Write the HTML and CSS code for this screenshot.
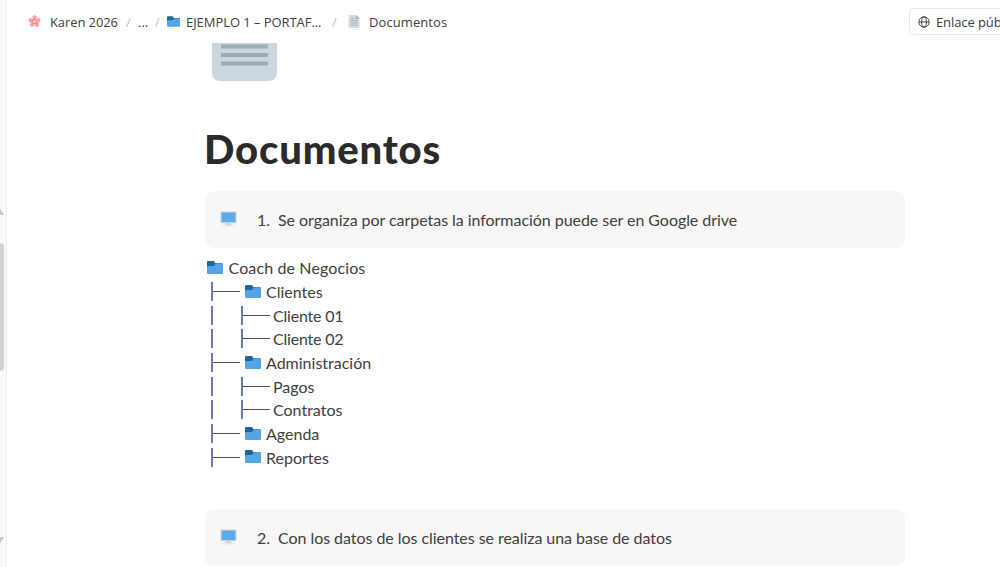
FILE: index.html
```html
<!DOCTYPE html>
<html lang="es">
<head>
  <meta charset="UTF-8">
  <meta name="viewport" content="width=device-width, initial-scale=1.0">
  <title>Documentos</title>
  <link rel="stylesheet" href="styles.css">
</head>
<body>
  <svg width="0" height="0" class="sprites">
    <symbol id="folder" viewBox="0 0 16 13">
      <path d="M0 1.2Q0 0 1.2 0H6.4Q7.4 0 7.8 1L8.3 2.2H14.8Q16 2.2 16 3.4V8H0Z" fill="#226699"/>
      <path d="M0 11.8V6.2Q0 5 1.2 5H6Q7.4 5 7.9 3.8Q8.3 2.8 9.3 2.8H14.8Q16 2.8 16 4V11.8Q16 13 14.8 13H1.2Q0 13 0 11.8Z" fill="#55a5e6"/>
    </symbol>
    <symbol id="screen" viewBox="0 0 18 17">
      <path d="M6.5 12H11.5L12.5 15.5H5.5Z" fill="#ccd6dd"/>
      <rect x="1.5" y="15" width="15" height="1.5" rx=".7" fill="#e6eaee"/>
      <rect x=".5" y=".5" width="17" height="12.5" rx="1" fill="#c3d3e0"/>
      <rect x="1.7" y="1.7" width="14.6" height="10" fill="#5aacec"/>
    </symbol>
  </svg>

  <aside class="sidebar">
    <span class="arrow up"></span>
    <span class="thumb"></span>
    <span class="arrow down"></span>
  </aside>

  <main class="page">
    <header class="topbar">
      <svg class="flower" viewBox="0 0 14 14">
        <g fill="#f6a3b2">
          <ellipse cx="7" cy="3.2" rx="2.3" ry="3"/>
          <ellipse cx="7" cy="3.2" rx="2.3" ry="3" transform="rotate(72 7 7)"/>
          <ellipse cx="7" cy="3.2" rx="2.3" ry="3" transform="rotate(144 7 7)"/>
          <ellipse cx="7" cy="3.2" rx="2.3" ry="3" transform="rotate(216 7 7)"/>
          <ellipse cx="7" cy="3.2" rx="2.3" ry="3" transform="rotate(288 7 7)"/>
        </g>
        <path d="M7 3.7L8 6L10.3 6.2L8.5 7.7L9.2 10.2L7 8.9L4.8 10.2L5.5 7.7L3.7 6.2L6 6Z" fill="#e9708a"/>
        <circle cx="7" cy="7.2" r="1.6" fill="#ffdc7d"/>
      </svg>
      <span class="crumb karen">Karen 2026</span>
      <span class="slash">/</span>
      <span class="crumb dots">...</span>
      <span class="slash">/</span>
      <svg class="crumb-folder"><use href="#folder"/></svg>
      <span class="crumb ejemplo">EJEMPLO 1 – PORTAF...</span>
      <span class="slash">/</span>
      <svg class="crumb-doc" viewBox="0 0 12 14">
        <path d="M1 0H8L12 4V13Q12 14 11 14H1Q0 14 0 13V1Q0 0 1 0Z" fill="#d6dee4"/>
        <path d="M8 0L12 4H8Z" fill="#99aab5"/>
        <path d="M2 3.5H6.5M2 6H10M2 8.5H10M2 11H10" stroke="#99aab5"/>
      </svg>
      <span class="crumb current">Documentos</span>
      <button class="share">
        <svg viewBox="0 0 13 13" fill="none" stroke="#3c3c3c">
          <circle cx="6.5" cy="6.5" r="5.6"/>
          <ellipse cx="6.5" cy="6.5" rx="2.6" ry="5.6"/>
          <path d="M1 6.5H12"/>
        </svg>
        <span>Enlace púb</span>
      </button>
    </header>

    <article class="doc">
      <svg class="cover-icon" viewBox="0 0 65 38">
        <path d="M0 0H65V29Q65 38 56 38H9Q0 38 0 29Z" fill="#ccd6e0"/>
        <path d="M9 3.5H56M9 12H56M9 20.5H56" stroke="#9aabb5" stroke-width="4"/>
      </svg>
      <h1>Documentos</h1>

      <section class="callout">
        <svg><use href="#screen"/></svg>
        <span class="num">1.</span>
        <p class="first">Se organiza por carpetas la información puede ser en Google drive</p>
      </section>

      <div class="tree">
        <div class="row"><svg><use href="#folder"/></svg><span class="root">Coach de Negocios</span></div>
        <div class="row"><i class="branch"></i><svg><use href="#folder"/></svg><span>Clientes</span></div>
        <div class="row"><i class="pipe"></i><i class="branch"></i><span class="client">Cliente 01</span></div>
        <div class="row"><i class="pipe"></i><i class="branch"></i><span class="client">Cliente 02</span></div>
        <div class="row"><i class="branch"></i><svg><use href="#folder"/></svg><span>Administración</span></div>
        <div class="row"><i class="pipe"></i><i class="branch"></i><span>Pagos</span></div>
        <div class="row"><i class="pipe"></i><i class="branch"></i><span>Contratos</span></div>
        <div class="row"><i class="branch"></i><svg><use href="#folder"/></svg><span>Agenda</span></div>
        <div class="row"><i class="branch"></i><svg><use href="#folder"/></svg><span>Reportes</span></div>
      </div>

      <section class="callout">
        <svg><use href="#screen"/></svg>
        <span class="num">2.</span>
        <p class="second">Con los datos de los clientes se realiza una base de datos</p>
      </section>
    </article>
  </main>
</body>
</html>
```
FILE: styles.css
```css
* {
  box-sizing: border-box;
}

body {
  margin: 0;
  height: 567px;
  display: flex;
  overflow: hidden;
  background: #fff;
  color: #404040;
  font-family: Lato, sans-serif;
}

.sprites {
  position: absolute;
}

/* Sidebar */
.sidebar {
  flex: none;
  width: 7px;
  height: 567px;
  padding-top: 208px;
  background: #faf9f9;
  border-right: 1px solid #eeecec;
  display: flex;
  flex-direction: column;
}

.arrow {
  width: 4px;
  height: 7px;
  background: #c9c7c7;
}

.arrow.up {
  clip-path: polygon(0 0, 100% 100%, 0 100%);
}

.arrow.down {
  margin-top: 166px;
  clip-path: polygon(0 0, 100% 0, 0 100%);
}

.thumb {
  width: 4px;
  height: 128px;
  margin-top: 28px;
  background: #d3d1d1;
  border-radius: 0 4px 4px 0;
}

.page {
  flex: none;
  width: 993px;
}

/* Top bar */
.topbar {
  display: flex;
  align-items: center;
  height: 43px;
  padding-left: 21px;
  font-family: "Open Sans", sans-serif;
  font-size: 13px;
  line-height: 20px;
  white-space: nowrap;
  overflow: hidden;
}

.topbar svg {
  flex: none;
}

.crumb {
  flex: none;
}

.flower {
  width: 13px;
  height: 13px;
}

.karen {
  width: 68px;
  margin-left: 9px;
  letter-spacing: -0.1px;
}

.slash {
  flex: none;
  width: 5px;
  color: #c4c4c4;
}

.karen + .slash {
  margin-left: 8px;
}

.dots {
  width: 10px;
  margin: 0 7px 0 7px;
}

.crumb-folder {
  width: 13px;
  height: 11px;
  margin: -1px 6px 0 7px;
}

.ejemplo {
  width: 136px;
  margin-right: 10px;
  letter-spacing: -0.06px;
}

.crumb-doc {
  width: 12px;
  height: 13px;
  margin: 0 9px 0 11px;
}

.current {
  letter-spacing: 0.08px;
}

.share {
  flex: none;
  display: flex;
  align-items: center;
  gap: 6px;
  width: 120px;
  height: 27px;
  margin-left: auto;
  margin-right: -29px;
  padding: 0 8px;
  background: #fff;
  border: 1px solid #e9e9e9;
  border-radius: 5px;
  color: inherit;
  font: inherit;
  letter-spacing: -0.1px;
}

.share svg {
  width: 12px;
  height: 12px;
}

/* Document */
.doc {
  width: 700px;
  margin-left: 198px;
}

.cover-icon {
  display: block;
  width: 65px;
  height: 38px;
  margin-left: 6.5px;
}

h1 {
  margin: 43px 0 17px -1px;
  color: #2b2b2b;
  font-size: 40px;
  font-weight: 900;
  line-height: 50px;
  letter-spacing: 0.85px;
}

.callout {
  display: flex;
  align-items: center;
  height: 57px;
  padding-left: 15px;
  background: #f9f7f6;
  border-radius: 9px;
  font-size: 16px;
  white-space: nowrap;
}

.callout svg {
  width: 17px;
  height: 16px;
  margin-top: -2px;
}

.num {
  width: 21px;
  margin-left: 20px;
}

.callout p {
  margin: 0;
  letter-spacing: -0.05px;
}

/* Folder tree */
.tree {
  margin: 8px 0 40px;
  font-size: 16px;
}

.row {
  display: flex;
  align-items: center;
  height: 23.7px;
}

.row svg {
  width: 16px;
  height: 13px;
  margin: -1px 5px 0 2px;
}

.root {
  margin-left: 0.5px;
  letter-spacing: 0.12px;
}

.client {
  letter-spacing: -0.2px;
}

.branch,
.pipe {
  height: 19px;
  margin-left: 6px;
  border-left: 2px solid #6a7bb4;
}

.branch {
  width: 29px;
  margin-right: 3px;
  background: linear-gradient(#505050, #505050) 0 9px / 100% 1px no-repeat;
}

.pipe {
  width: 24px;
}
```
